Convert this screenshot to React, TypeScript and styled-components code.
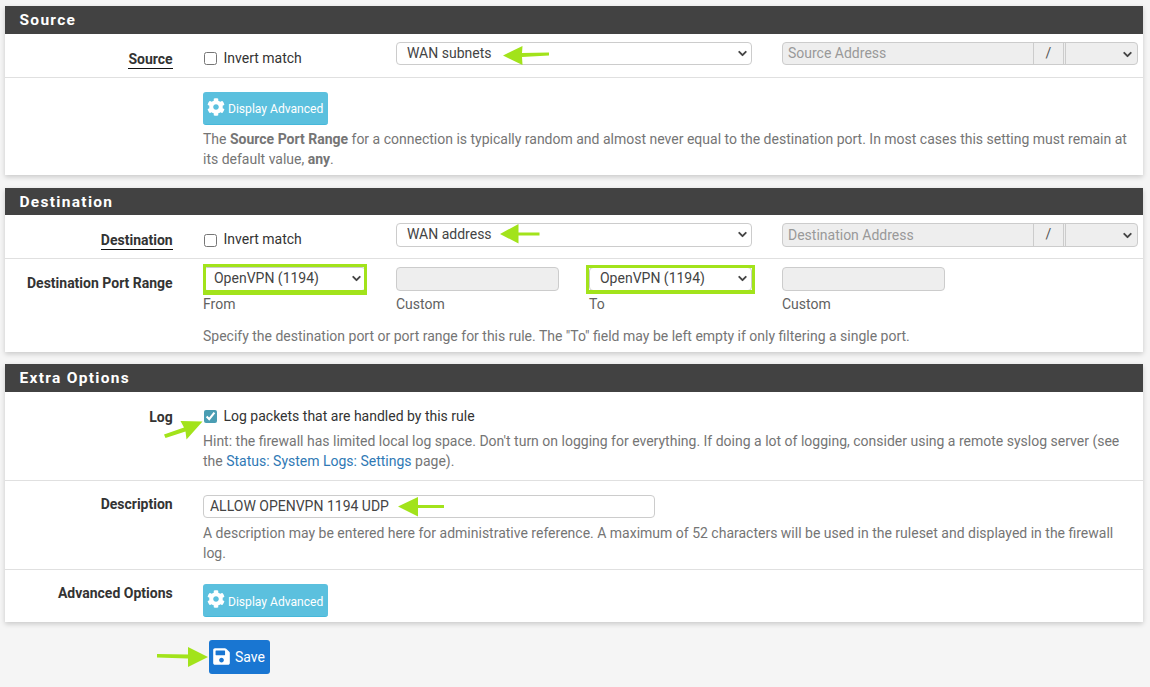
import React from "react";
import styled, { createGlobalStyle } from "styled-components";
import { ChevronDown } from "lucide-react";
import { FaCog, FaSave } from "react-icons/fa";

const GlobalStyle = createGlobalStyle`
    html, body {
        margin: 0;
        padding: 0;
        background: #f5f5f5;
        font-family: Roboto, "Liberation Sans", sans-serif;
        font-size: 14px;
        color: #212121;
    }
`;

// page coordinates of the green annotation marks in the picture
const ARROWS: number[][][] = [
    [[503, 55], [522.5, 45.5], [522, 52.5], [549, 52], [549, 55], [522, 56.5], [522.5, 64.5]],
    [[499.5, 234], [518, 224], [518, 232.5], [539, 232.5], [539, 235.5], [518, 235.5], [518, 243.5]],
    [[202, 421.5], [180, 421], [183.5, 427.5], [163.5, 434.5], [165, 438], [185, 431.5], [186, 439.5]],
    [[398, 506], [418, 496.5], [418, 504.5], [444, 504.5], [444, 507.5], [418, 507.5], [418, 516]],
    [[208, 657], [188, 647], [188, 654.5], [157, 654], [157, 657.5], [188, 658.5], [188, 667]],
];

const Arrow = ({ points }: { points: number[][] }) => {
    const xs = points.map((p) => p[0]);
    const ys = points.map((p) => p[1]);
    const left = Math.min(...xs);
    const top = Math.min(...ys);
    const width = Math.max(...xs) - left;
    const height = Math.max(...ys) - top;
    return (
        <ArrowSvg
            style={{ left, top, width, height }}
            viewBox={`${left} ${top} ${width} ${height}`}
        >
            <polygon points={points.map((p) => p.join(",")).join(" ")} />
        </ArrowSvg>
    );
};

type Mark = "from" | "to";

const SelectField = ({
    value,
    $span,
    mark,
}: {
    value: string;
    $span?: number;
    mark?: Mark;
}) => (
    <SelectWrap $span={$span}>
        <Select defaultValue={value}>
            <option>{value}</option>
        </Select>
        <Chevron size={13} strokeWidth={3.5} />
        {mark && <GreenBox $mark={mark} />}
    </SelectWrap>
);

const AddressGroup = ({ placeholder }: { placeholder: string }) => (
    <Group>
        <GroupInput disabled placeholder={placeholder} />
        <GroupSlash>/</GroupSlash>
        <GroupSelect>
            <Chevron size={13} strokeWidth={3.5} />
        </GroupSelect>
    </Group>
);

const AdvancedButton = () => (
    <InfoButton type="button">
        <FaCog size={18} />
        <span>Display Advanced</span>
    </InfoButton>
);

const App = () => {
    return (
        <Page>
            <GlobalStyle />

            <Panel>
                <PanelHeading>Source</PanelHeading>
                <Row>
                    <Label $inset={7} $underline>
                        <span>Source</span>
                    </Label>
                    <Fields>
                        <CheckLine $inset={8}>
                            <Check type="checkbox" />
                            Invert match
                        </CheckLine>
                        <SelectField value="WAN subnets" $span={2} />
                        <AddressGroup placeholder="Source Address" />
                    </Fields>
                </Row>
                <LastRow $height={97.5}>
                    <div />
                    <Content>
                        <AdvancedButton />
                        <Help>
                            The <b>Source Port Range</b> for a connection is
                            typically random and almost never equal to the
                            destination port. In most cases this setting must
                            remain at its default value, <b>any</b>.
                        </Help>
                    </Content>
                </LastRow>
            </Panel>

            <Panel>
                <PanelHeading>Destination</PanelHeading>
                <Row>
                    <Label $inset={7} $underline>
                        <span>Destination</span>
                    </Label>
                    <Fields>
                        <CheckLine $inset={8}>
                            <Check type="checkbox" />
                            Invert match
                        </CheckLine>
                        <SelectField value="WAN address" $span={2} />
                        <AddressGroup placeholder="Destination Address" />
                    </Fields>
                </Row>
                <LastRow $height={92.5}>
                    <Label $inset={6}>Destination Port Range</Label>
                    <Content>
                        <Fields>
                            <div>
                                <SelectField value="OpenVPN (1194)" mark="from" />
                                <Caption>From</Caption>
                            </div>
                            <div>
                                <BlankInput disabled />
                                <Caption>Custom</Caption>
                            </div>
                            <div>
                                <SelectField value="OpenVPN (1194)" mark="to" />
                                <Caption>To</Caption>
                            </div>
                            <div>
                                <BlankInput disabled />
                                <Caption>Custom</Caption>
                            </div>
                        </Fields>
                        <PortHelp>
                            Specify the destination port or port range for this
                            rule. The "To" field may be left empty if only
                            filtering a single port.
                        </PortHelp>
                    </Content>
                </LastRow>
            </Panel>

            <Panel>
                <PanelHeading>Extra Options</PanelHeading>
                <LogRow>
                    <Label $inset={7}>Log</Label>
                    <Content>
                        <CheckLine $inset={8}>
                            <Check type="checkbox" defaultChecked />
                            Log packets that are handled by this rule
                        </CheckLine>
                        <Hint>
                            Hint: the firewall has limited local log space.
                            Don't turn on logging for everything. If doing a lot
                            of logging, consider using a remote syslog server
                            (see the <a href="#logs">Status: System Logs: Settings</a>{" "}
                            page).
                        </Hint>
                    </Content>
                </LogRow>
                <DescriptionRow>
                    <Label $inset={5}>Description</Label>
                    <Content>
                        <TextInput defaultValue="ALLOW OPENVPN 1194 UDP" />
                        <DescriptionHelp>
                            A description may be entered here for administrative
                            reference. A maximum of 52 characters will be used in
                            the ruleset and displayed in the firewall log.
                        </DescriptionHelp>
                    </Content>
                </DescriptionRow>
                <LastRow $height={52}>
                    <Label $inset={5}>Advanced Options</Label>
                    <Content>
                        <AdvancedButton />
                    </Content>
                </LastRow>
            </Panel>

            <Footer>
                <SaveButton type="button">
                    <FaSave size={19} />
                    Save
                </SaveButton>
            </Footer>

            {ARROWS.map((points) => (
                <Arrow key={points[0].join("-")} points={points} />
            ))}
        </Page>
    );
};

const Page = styled.div`
    position: relative;
    display: flex;
    flex-direction: column;
    height: 687px;
    padding: 6px 7px 0 5px;
    box-sizing: border-box;
    overflow: hidden;
`;

const Panel = styled.section`
    background: #fff;
    box-shadow: 0 2px 5px rgba(0, 0, 0, 0.18);
    margin-bottom: 12.5px;
`;

const PanelHeading = styled.h2`
    margin: 0;
    height: 27.5px;
    padding-left: 14.5px;
    background: #424242;
    color: #fff;
    font-size: 15.5px;
    font-weight: 700;
    line-height: 28px;
    letter-spacing: 1.3px;
`;

const Row = styled.div`
    display: grid;
    grid-template-columns: 167.7px 935px;
    column-gap: 30.3px;
    height: 44px;
    padding-top: 8px;
    box-sizing: border-box;
    border-bottom: 1px solid #e0e0e0;
`;

const LastRow = styled(Row)<{ $height: number }>`
    height: ${({ $height }) => $height}px;
    border-bottom: none;
`;

const LogRow = styled(Row)`
    height: 89.5px;
`;

const DescriptionRow = styled(Row)`
    height: 89px;
`;

const Label = styled.div<{ $inset?: number; $underline?: boolean }>`
    padding-top: ${({ $inset }) => $inset ?? 0}px;
    text-align: right;
    font-weight: 700;
    line-height: 20px;
    color: #333;
    & span {
        display: inline-block;
        line-height: 17px;
        border-bottom: ${({ $underline }) =>
            $underline ? "1px solid #111" : "none"};
    }
`;

const Fields = styled.div`
    display: grid;
    grid-template-columns: repeat(5, 163px);
    column-gap: 30px;
    align-items: start;
`;

const Content = styled.div`
    min-width: 0;
`;

const CheckLine = styled.label<{ $inset?: number }>`
    display: flex;
    align-items: center;
    gap: 6.5px;
    padding-top: ${({ $inset }) => $inset ?? 0}px;
    line-height: 17px;
    color: #333;
`;

const Check = styled.input`
    width: 13px;
    height: 13px;
    margin: 1px 0 0 1px;
    accent-color: #4a9db3;
`;

const SelectWrap = styled.div<{ $span?: number }>`
    position: relative;
    grid-column: span ${({ $span }) => $span ?? 1};
    height: 23.5px;
`;

const GreenBox = styled.div<{ $mark: Mark }>`
    position: absolute;
    inset: ${({ $mark }) =>
        $mark === "from" ? "-3px -1px -4px 0" : "-2px -3px -3px -3px"};
    border: 3.5px solid #a2e31b;
    border-bottom-width: ${({ $mark }) => ($mark === "from" ? 5 : 4.5)}px;
    pointer-events: none;
`;

const Select = styled.select`
    display: block;
    width: 100%;
    height: 100%;
    padding: 0 0 1px 10px;
    border: 1px solid #ccc;
    border-radius: 4px;
    background: #fff;
    color: #444;
    font: 14px Roboto, "Liberation Sans", sans-serif;
    appearance: none;
`;

const Chevron = styled(ChevronDown)`
    position: absolute;
    top: 5px;
    right: 3px;
    color: #444;
    pointer-events: none;
`;

const Group = styled.div`
    grid-column: span 2;
    display: flex;
    height: 23.5px;
    border: 1px solid #ccc;
    border-radius: 4px;
    box-sizing: border-box;
    background: #eee;
    overflow: hidden;
`;

const GroupInput = styled.input`
    flex: 1;
    min-width: 0;
    padding: 0 0 0 5px;
    border: none;
    background: transparent;
    font: 14px Roboto, "Liberation Sans", sans-serif;
    &::placeholder {
        color: #999;
    }
`;

const GroupSlash = styled.div`
    width: 31px;
    box-sizing: border-box;
    border-left: 1px solid #ccc;
    border-right: 1px solid #ccc;
    text-align: center;
    line-height: 21px;
    color: #555;
`;

const GroupSelect = styled.div`
    position: relative;
    width: 72px;
    margin-left: 1px;
    box-sizing: border-box;
    border-left: 1px solid #ccc;
`;

const BlankInput = styled.input`
    display: block;
    width: 100%;
    height: 23.5px;
    box-sizing: border-box;
    border: 1px solid #ccc;
    border-radius: 4px;
    background: #eee;
`;

const Caption = styled.div`
    margin-top: 3.5px;
    line-height: 20px;
    color: #616161;
`;

const InfoButton = styled.button`
    display: flex;
    align-items: center;
    gap: 3px;
    width: 125px;
    height: 33px;
    margin-top: 6px;
    padding: 0 0 0 4px;
    border: none;
    border-bottom: 1px solid #46b8da;
    border-radius: 3px;
    background: #5bc0de;
    color: #fff;
    font: 12.1px Roboto, "Liberation Sans", sans-serif;
    & svg {
        margin-top: -2px;
    }
    & span {
        margin-top: 3px;
    }
`;

const Help = styled.p`
    margin: 4.5px 0 0;
    line-height: 20px;
    color: #757575;
    & b {
        font-weight: 700;
    }
`;

const PortHelp = styled(Help)`
    margin-top: 11.5px;
`;

const Hint = styled(Help)`
    margin-top: 6px;
    & a {
        color: #2f79b5;
        text-decoration: none;
    }
`;

const TextInput = styled.input`
    display: block;
    width: 452px;
    height: 23.5px;
    margin-top: 5.5px;
    padding: 0 6px;
    box-sizing: border-box;
    border: 1px solid #ccc;
    border-radius: 4px;
    color: #444;
    font: 14px Roboto, "Liberation Sans", sans-serif;
`;

const DescriptionHelp = styled(Help)`
    margin-top: 5px;
`;

const Footer = styled.div`
    padding: 5.5px 0 0 204px;
`;

const SaveButton = styled.button`
    display: flex;
    align-items: center;
    gap: 4px;
    width: 61px;
    height: 34px;
    padding: 0 0 1px 3px;
    border: none;
    border-radius: 3px;
    background: #1976d2;
    color: #fff;
    font: 14px Roboto, "Liberation Sans", sans-serif;
`;

const ArrowSvg = styled.svg`
    position: absolute;
    overflow: visible;
    fill: #a2e31b;
    pointer-events: none;
`;

export default App;
